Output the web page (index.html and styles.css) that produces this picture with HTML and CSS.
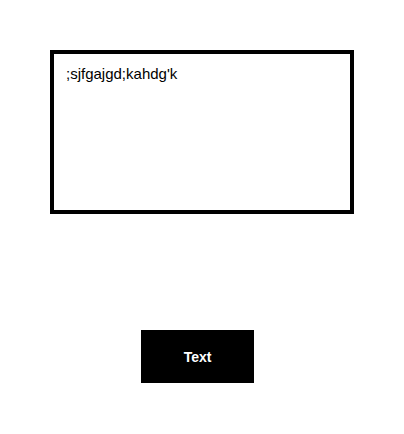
FILE: index.html
```html
<!DOCTYPE html>
<html>
<head>
<meta charset="utf-8">
<link rel="stylesheet" href="styles.css">
</head>
<body>
<div class="page">
  <div class="note">;sjfgajgd;kahdg'k</div>
  <button class="action">Text</button>
</div>
</body>
</html>
```
FILE: styles.css
```css
html, body {
  margin: 0;
  padding: 0;
  background: #fff;
}
.page {
  display: flex;
  flex-direction: column;
  align-items: flex-start;
  padding: 50px 0 0 50px;
  font-family: "Liberation Sans", Arial, sans-serif;
}
.note {
  box-sizing: border-box;
  width: 304px;
  height: 164px;
  border: 4px solid #000;
  padding: 11px 12px;
  font-size: 15px;
  line-height: 17px;
  color: #000;
}
.action {
  margin: 116px 0 0 91px;
  width: 113px;
  height: 53px;
  border: none;
  background: #000;
  color: #fff;
  font-family: "Liberation Sans", Arial, sans-serif;
  font-weight: bold;
  font-size: 14px;
  padding: 0;
}
```
